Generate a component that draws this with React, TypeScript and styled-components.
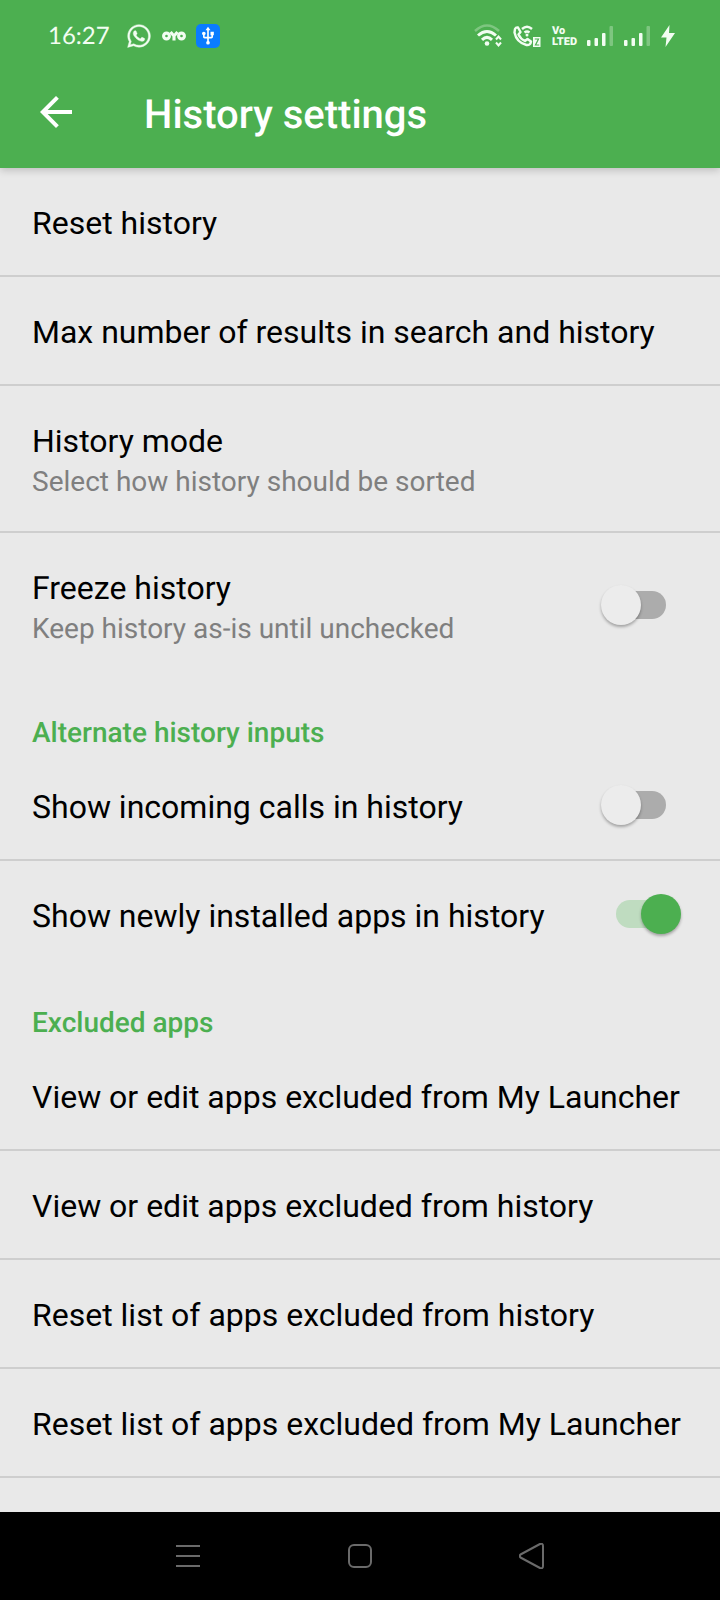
import React, { useState } from "react";
import styled, { createGlobalStyle } from "styled-components";
import { FaWhatsapp } from "react-icons/fa";
import { MdArrowBack, MdUsb } from "react-icons/md";

const GREEN = "#4caf50";

const GlobalStyle = createGlobalStyle`
  *, *::before, *::after { box-sizing: border-box; }
  html, body, #root { height: 100%; }
  body {
    margin: 0;
    background: #e9e9e9;
    color: #000;
    font-family: Roboto, "Liberation Sans", sans-serif;
    text-rendering: geometricPrecision;
  }
  button, input { font: inherit; color: inherit; margin: 0; }
`;

const Screen = styled.div`
  display: flex;
  flex-direction: column;
  min-height: 100%;
`;

const TopArea = styled.header`
  flex: none;
  background: ${GREEN};
  color: #fff;
  box-shadow: 0 2px 8px rgba(0, 0, 0, 0.2);
`;

const StatusBar = styled.div`
  display: flex;
  align-items: center;
  height: 56px;
  padding: 16px 45px 0 48px;
  color: #f2fdf2;
`;

const Clock = styled.time`
  margin-right: 16px;
  font-family: Lato, sans-serif;
  font-size: 24px;
  line-height: 32px;
`;

const StatusGroup = styled.div<{ $end?: boolean }>`
  display: flex;
  align-items: center;
  gap: ${(p) => (p.$end ? 11 : 10)}px;
  margin-left: ${(p) => (p.$end ? "auto" : "0")};
  svg { display: block; }
`;

const UsbBadge = styled.span`
  display: grid;
  place-items: center;
  width: 24px;
  height: 24px;
  border-radius: 5px;
  background: #0a7cff;
  color: #fff;
`;

const Volte = styled.span`
  width: 24px;
  font-family: "Liberation Sans Narrow", Roboto, sans-serif;
  font-size: 11px;
  font-weight: 900;
  line-height: 11px;
  white-space: pre;
`;

const Toolbar = styled.div`
  display: flex;
  align-items: center;
  gap: 64px;
  height: 112px;
  padding: 0 32px;
`;

const BackButton = styled.button`
  display: grid;
  place-items: center;
  padding: 0;
  border: 0;
  background: none;
  color: #fff;
  svg { display: block; }
`;

const Title = styled.h1`
  margin: 0;
  padding-top: 6px;
  font-size: 40px;
  font-weight: 500;
  line-height: 48px;
`;

const Content = styled.main`
  flex: 1;
  padding-bottom: 34px;
`;

const Group = styled.section`
  display: flex;
  flex-direction: column;
`;

const GroupTitle = styled.h2`
  margin: 0;
  padding: 38px 32px 2px;
  color: ${GREEN};
  font-size: 28px;
  font-weight: 500;
  line-height: 34px;
`;

const rowStyle = `
  display: flex;
  align-items: center;
  width: 100%;
  border: 0;
  background: none;
  text-align: left;
`;

const Row = styled.button<{ $divider: boolean }>`
  ${rowStyle}
  padding: 36px 32px 33px;
  border-bottom: ${(p) => (p.$divider ? "2px solid #cecece" : "0")};
`;

const SwitchRow = styled.label<{ $divider: boolean }>`
  ${rowStyle}
  justify-content: space-between;
  padding: 0 39px 0 32px;
  border-bottom: ${(p) => (p.$divider ? "2px solid #cecece" : "0")};
`;

const SwitchText = styled.span`
  padding: 36px 0 33px;
`;

const RowTitle = styled.span`
  display: block;
  font-size: 32px;
  line-height: 38px;
`;

const RowSummary = styled.span`
  display: block;
  padding-top: 6px;
  color: #7f7f7f;
  font-size: 28px;
  line-height: 32px;
`;

const Switch = styled.input`
  appearance: none;
  flex: none;
  display: grid;
  align-items: center;
  width: 80px;
  height: 40px;

  && { margin-bottom: 2px; }
  &::before, &::after {
    content: "";
    grid-area: 1 / 1;
  }
  &::before {
    justify-self: center;
    width: 50px;
    height: 28px;
    border-radius: 14px;
    background: #acacac;
  }
  &::after {
    justify-self: start;
    width: 40px;
    height: 40px;
    border-radius: 50%;
    background: #ececec;
    box-shadow: 0 2px 3px rgba(0, 0, 0, 0.3);
  }
  &:checked::before { background: #bfdcc0; }
  &:checked::after { justify-self: end; background: ${GREEN}; }
`;

const NavBar = styled.nav`
  flex: none;
  display: flex;
  justify-content: center;
  gap: 124px;
  height: 88px;
  background: #000;
`;

const NavButton = styled.button`
  display: grid;
  place-items: center;
  width: 48px;
  padding: 0;
  border: 0;
  background: none;
  svg { display: block; }
`;

const WifiIcon = () => (
  <svg width="28" height="24" viewBox="0 0 28 24" fill="none" stroke="currentColor" strokeWidth="3">
    <path d="M1 7Q13 -4 25 7" opacity=".3" strokeWidth="2.5" />
    <path d="M4 11.5Q13 3.500 22 11.500" />
    <path d="M8 15.800Q13 11 18 15.800" />
    <circle cx="13" cy="19.500" r="2.300" fill="currentColor" stroke="none" />
    <path d="M22 15.500l2.500-3 2.500 3M22 18.500l2.500 3 2.500-3" strokeWidth="2" />
  </svg>
);

const WifiCallIcon = () => (
  <svg width="28" height="24" viewBox="0 0 28 24" fill="none" stroke="currentColor" strokeWidth="2.4">
    <path
      d="M2 5Q3 3 5 3.500L7.500 8 5.500 10.500Q7.500 15 12 17L14.500 15 18 17.500Q17.500 21.500 13.500 21Q3.500 18.500 1.500 8.500z"
      strokeLinejoin="round"
    />
    <path d="M9 5Q14 .5 19 5M11.500 8.500Q14 6.500 16.500 8.500" />
    <circle cx="14" cy="11" r="1.500" fill="currentColor" stroke="none" />
    <path d="M20 13h7.500v10h-7.500z" fill="currentColor" stroke="none" />
    <path d="M21.800 15h3.700l-3 6h3.700" stroke={GREEN} strokeWidth="1.2" />
  </svg>
);

const SignalIcon = () => (
  <svg width="26" height="24" viewBox="0 0 26 24" fill="currentColor">
    <rect x="0" y="16" width="3.500" height="6" rx="1" />
    <rect x="7.500" y="14" width="3.500" height="8" rx="1" />
    <rect x="15" y="9" width="3.500" height="13" rx="1" />
    <rect x="22.500" y="2" width="3.500" height="20" rx="1" opacity=".3" />
  </svg>
);

const BoltIcon = () => (
  <svg width="14" height="24" viewBox="0 0 14 24" fill="currentColor">
    <path d="M8.500 1L0 13.500h5.500L4.500 23l9.500-14H8z" />
  </svg>
);

const OyoIcon = () => (
  <svg width="24" height="12" viewBox="0 0 24 12" fill="none" stroke="currentColor" strokeWidth="3.1">
    <circle cx="4.500" cy="6" r="2.900" />
    <path d="M8.500 2l3.500 4 3.500-4M12 6v4.500" />
    <circle cx="19.500" cy="6" r="2.900" />
  </svg>
);

type SwitchItemProps = { title: string; summary?: string; on?: boolean; divider?: boolean };

const SwitchItem = ({ title, summary, on = false, divider = false }: SwitchItemProps) => {
  const [checked, setChecked] = useState(on);
  return (
    <SwitchRow $divider={divider}>
      <SwitchText>
        <RowTitle>{title}</RowTitle>
        {summary && <RowSummary>{summary}</RowSummary>}
      </SwitchText>
      <Switch type="checkbox" role="switch" checked={checked} onChange={(e) => setChecked(e.target.checked)} />
    </SwitchRow>
  );
};

const Item = ({ title, summary }: { title: string; summary?: string }) => (
  <Row type="button" $divider>
    <span>
      <RowTitle>{title}</RowTitle>
      {summary && <RowSummary>{summary}</RowSummary>}
    </span>
  </Row>
);

export default function App() {
  return (
    <Screen>
      <GlobalStyle />
      <TopArea>
        <StatusBar>
          <Clock>16:27</Clock>
          <StatusGroup>
            <FaWhatsapp size={26} stroke="currentColor" strokeWidth={8} />
            <OyoIcon />
            <UsbBadge><MdUsb size={20} /></UsbBadge>
          </StatusGroup>
          <StatusGroup $end>
            <WifiIcon />
            <WifiCallIcon />
            <Volte>{"Vo\nLTED"}</Volte>
            <SignalIcon />
            <SignalIcon />
            <BoltIcon />
          </StatusGroup>
        </StatusBar>
        <Toolbar>
          <BackButton type="button" aria-label="Back"><MdArrowBack size={48} /></BackButton>
          <Title>History settings</Title>
        </Toolbar>
      </TopArea>
      <Content>
        <Group>
          <Item title="Reset history" />
          <Item title="Max number of results in search and history" />
          <Item title="History mode" summary="Select how history should be sorted" />
          <SwitchItem title="Freeze history" summary="Keep history as-is until unchecked" />
        </Group>
        <Group>
          <GroupTitle>Alternate history inputs</GroupTitle>
          <SwitchItem title="Show incoming calls in history" divider />
          <SwitchItem title="Show newly installed apps in history" on />
        </Group>
        <Group>
          <GroupTitle>Excluded apps</GroupTitle>
          <Item title="View or edit apps excluded from My Launcher" />
          <Item title="View or edit apps excluded from history" />
          <Item title="Reset list of apps excluded from history" />
          <Item title="Reset list of apps excluded from My Launcher" />
        </Group>
      </Content>
      <NavBar>
        <NavButton type="button" aria-label="Recent apps">
          <svg width="26" height="26" viewBox="0 0 26 26" stroke="#6a6a6a" strokeWidth="2">
            <path d="M1 3h24M1 13h24M1 23h24" />
          </svg>
        </NavButton>
        <NavButton type="button" aria-label="Home">
          <svg width="26" height="26" viewBox="0 0 26 26" fill="none" stroke="#6a6a6a" strokeWidth="2">
            <rect x="2" y="2" width="22" height="22" rx="5" />
          </svg>
        </NavButton>
        <NavButton type="button" aria-label="Back">
          <svg width="26" height="26" viewBox="0 0 26 26" fill="none" stroke="#6a6a6a" strokeWidth="2" strokeLinejoin="round">
            <path d="M1.500 11.500L21 1q3-1 3 2v20q0 3-3 2L1.500 14.500q-1.500-1.500 0-3z" />
          </svg>
        </NavButton>
      </NavBar>
    </Screen>
  );
}
